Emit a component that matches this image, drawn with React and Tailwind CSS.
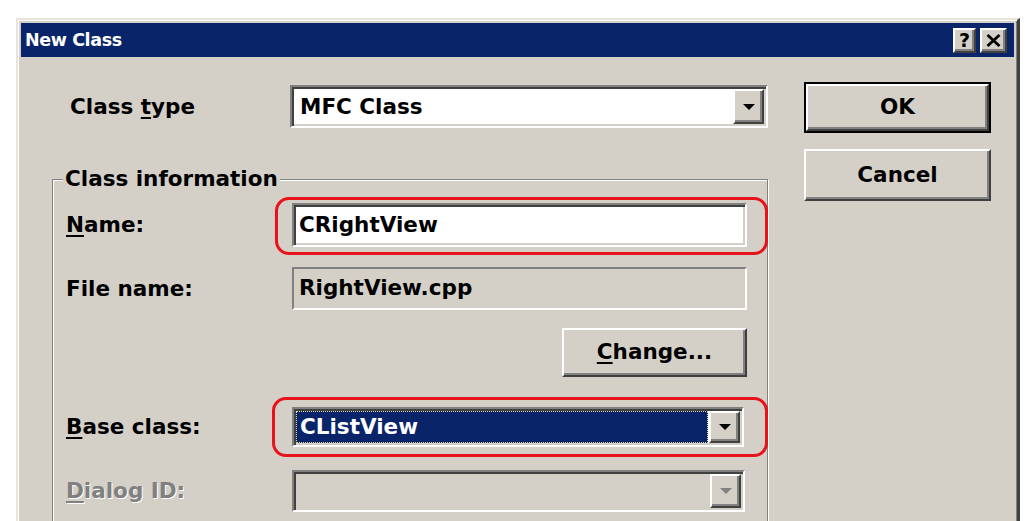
import React from 'react'

const font = "font-['DejaVu_Sans',sans-serif] font-bold"
const raised =
  'bg-[#d4d0c8] border-2 border-t-white border-l-white border-r-[#404040] border-b-[#404040] shadow-[inset_-2px_-2px_0_#808080]'
const sunken =
  'border-2 border-t-[#808080] border-l-[#808080] border-r-white border-b-white shadow-[inset_2px_2px_0_#404040,inset_-2px_-2px_0_#d4d0c8]'

function Arrow({ color = '#000' }) {
  return (
    <svg width="14" height="8" viewBox="0 0 14 8">
      <path d="M1 1 H13 L7 7 Z" fill={color} />
    </svg>
  )
}

function DropButton({ disabled }) {
  return (
    <div className={`${raised} flex h-full w-[31px] shrink-0 items-center justify-center`}>
      <Arrow color={disabled ? '#808080' : '#000'} />
    </div>
  )
}

function RedMark({ className }) {
  return (
    <div
      className={`pointer-events-none absolute rounded-[14px] border-[3px] border-[#e8121a] ${className}`}
    />
  )
}

function Label({ children }) {
  return <div className="w-[239px] shrink-0 pl-[13px] text-[21.5px] leading-none">{children}</div>
}

export default function App() {
  return (
    <div className={`h-[521px] w-[1029px] overflow-hidden bg-white pl-[16px] pt-[18px] text-black ${font}`}>
      <div className="h-[620px] w-[1004px] border-l-2 border-t-2 border-r-[3px] border-l-[#e8e4dc] border-t-[#e8e4dc] border-r-[#404040] bg-[#d4d0c8] pl-[3px] pr-[3px] pt-[3px] shadow-[inset_1px_1px_0_#fff,inset_-1px_0_0_#808080]">
        {/* Title bar */}
        <div className="flex h-[34px] items-center justify-between bg-[#0a246a] pl-[4px] pr-[7px]">
          <span className="text-[17.5px] tracking-[-0.4px] text-white">New Class</span>
          <div className="flex gap-[4px]">
            <div className={`${raised} flex h-[25px] w-[23px] items-center justify-center text-[19px] leading-none`}>
              ?
            </div>
            <div className={`${raised} flex h-[25px] w-[27px] items-center justify-center`}>
              <svg width="15" height="13" viewBox="0 0 15 13">
                <path d="M1.5 1 L13.5 12 M13.5 1 L1.5 12" stroke="#000" strokeWidth="2.8" />
              </svg>
            </div>
          </div>
        </div>

        {/* Body */}
        <div className="flex">
          <div className="flex w-[747px] shrink-0 flex-col">
            <div className="mt-[28px] flex h-[43px] items-center">
              <div className="w-[269px] shrink-0 pl-[49px] text-[21.5px] leading-none">
                Class <span className="underline decoration-2 underline-offset-[3px]">t</span>ype
              </div>
              <div className={`${sunken} flex h-full w-[478px] items-center bg-white p-[2px]`}>
                <span className="flex-1 pl-[6px] pt-[2px] text-[21.5px]">MFC Class</span>
                <DropButton />
              </div>
            </div>

            {/* Class information group */}
            <div className="ml-[31px] mt-[51px] h-[420px] w-[716px] border border-[#808080] shadow-[inset_1px_1px_0_#fff,1px_1px_0_#fff]">
              <div className="-mt-[13px] ml-[10px] w-fit bg-[#d4d0c8] px-[2px] text-[21.5px] leading-[24px]">
                Class information
              </div>

              <div className="mt-[12px] flex h-[44px] items-center">
                <Label>
                  <span className="underline decoration-2 underline-offset-[3px]">N</span>ame:
                </Label>
                <div className="relative h-full w-[455px]">
                  <div className={`${sunken} flex h-full items-center bg-white pl-[5px] text-[21.5px]`}>
                    CRightView
                  </div>
                  <RedMark className="-bottom-[8px] -left-[17px] -right-[21px] -top-[6px]" />
                </div>
              </div>

              <div className="mt-[20px] flex h-[43px] items-center">
                <Label>File name:</Label>
                <div className="flex h-full w-[455px] items-center border-2 border-b-white border-l-[#808080] border-r-white border-t-[#808080] pl-[5px] text-[21.5px]">
                  RightView.cpp
                </div>
              </div>

              <div className="mt-[18px] flex h-[49px]">
                <div
                  className={`${raised} ml-[509px] flex h-full w-[185px] items-center justify-center text-[21.5px]`}
                >
                  <span>
                    <span className="underline decoration-2 underline-offset-[3px]">C</span>hange...
                  </span>
                </div>
              </div>

              <div className="mt-[30px] flex h-[40px] items-center">
                <Label>
                  <span className="underline decoration-2 underline-offset-[3px]">B</span>ase class:
                </Label>
                <div className="relative h-full w-[452px]">
                  <div className={`${sunken} flex h-full items-stretch bg-white p-[2px]`}>
                    <div className="mr-[1px] flex flex-1 items-center border border-dotted border-[#e8dca0] bg-[#0a246a] pl-[3px] text-[21.5px] text-white">
                      CListView
                    </div>
                    <DropButton />
                  </div>
                  <RedMark className="-bottom-[10px] -left-[20px] -right-[24px] -top-[10px]" />
                </div>
              </div>

              <div className="mt-[23px] flex h-[42px] items-center">
                <Label>
                  <span className="text-[#808080] [text-shadow:1px_1px_0_#fff]">
                    <span className="underline decoration-2 underline-offset-[3px]">D</span>ialog ID:
                  </span>
                </Label>
                <div className={`${sunken} flex h-full w-[453px] items-stretch bg-[#d4d0c8] p-[2px]`}>
                  <div className="flex-1" />
                  <DropButton disabled />
                </div>
              </div>
            </div>
          </div>

          {/* Buttons */}
          <div className="ml-[36px] mt-[25px] flex flex-col gap-[16px]">
            <div className="h-[51px] w-[187px] border-2 border-black">
              <div className={`${raised} flex h-full items-center justify-center text-[21.5px]`}>OK</div>
            </div>
            <div className={`${raised} flex h-[52px] w-[187px] items-center justify-center text-[21.5px]`}>
              Cancel
            </div>
          </div>
        </div>
      </div>
    </div>
  )
}
